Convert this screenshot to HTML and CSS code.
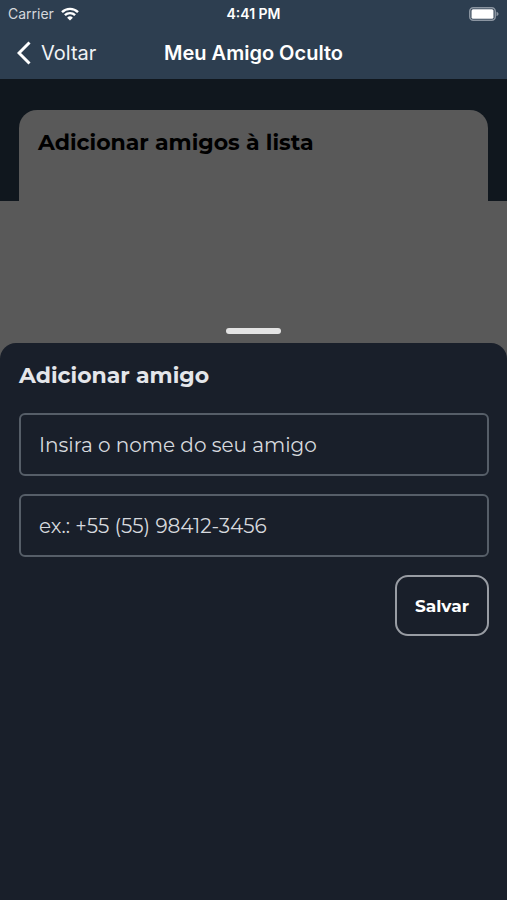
FILE: index.html
```html
<!DOCTYPE html>
<html lang="pt-BR">
<head>
  <meta charset="utf-8">
  <meta name="viewport" content="width=device-width, initial-scale=1">
  <title>Meu Amigo Oculto</title>
  <link rel="stylesheet" href="styles.css">
</head>
<body>
  <header class="top">
    <div class="status">
      <span class="carrier">Carrier
        <svg class="wifi" viewBox="0 0 18 14" aria-hidden="true">
          <path d="M1 5.2a11.4 11.4 0 0 1 16 0" />
          <path d="M3.9 8.2a7.2 7.2 0 0 1 10.2 0" />
          <path class="wifi-dot" d="M9 13.6 6.1 10.7a4.1 4.1 0 0 1 5.8 0z" />
        </svg>
      </span>
      <span class="time">4:41 PM</span>
      <svg class="battery" viewBox="0 0 30 14" aria-hidden="true">
        <rect class="battery-case" x="0.75" y="0.75" width="25.5" height="12.5" rx="3.5" />
        <rect class="battery-level" x="2.500" y="2.200" width="22" height="9.600" rx="1.500" />
        <path class="battery-tip" d="M27.5 4.8c1.2.4 2 1.200 2 2.200s-.8 1.800-2 2.200z" />
      </svg>
    </div>
    <nav class="nav">
      <a class="back" href="#voltar">
        <svg class="chevron" viewBox="0 0 14 24" aria-hidden="true"><path d="M12.500 1.500 2 12l10.500 10.500" /></svg>
        Voltar
      </a>
      <h1 class="title">Meu Amigo Oculto</h1>
    </nav>
  </header>
  <main class="screen">
    <section class="band">
      <div class="card"><h2 class="card-title">Adicionar amigos à lista</h2></div>
    </section>
    <div class="grab"><span class="handle"></span></div>
    <form class="sheet">
      <h2 class="sheet-title">Adicionar amigo</h2>
      <input class="field" type="text" aria-label="Nome do amigo" placeholder="Insira o nome do seu amigo">
      <input class="field" type="tel" aria-label="Telefone do amigo" placeholder="ex.: +55 (55) 98412-3456">
      <button class="save" type="button">Salvar</button>
    </form>
  </main>
</body>
</html>
```

FILE: styles.css
```css
* {
  box-sizing: border-box;
}

body {
  margin: 0;
  min-height: 100vh;
  display: flex;
  flex-direction: column;
  background: #191f2a;
  color: #fff;
  font-family: Montserrat, Inter, sans-serif;
}

h1,
h2 {
  margin: 0;
}

.top {
  background: #2d3e50;
  font-family: Inter, sans-serif;
}

.status,
.nav {
  display: grid;
  grid-template-columns: 1fr auto 1fr;
  align-items: center;
}

.status {
  height: 27px;
  padding: 0 8px;
  font-size: 14px;
}

.carrier {
  display: flex;
  align-items: center;
  gap: 7px;
  color: #d5d8dc;
}

.time {
  font-weight: 600;
}

.wifi {
  width: 18px;
  height: 14px;
  fill: none;
  stroke: #fff;
  stroke-width: 2.4;
}

.wifi-dot {
  fill: #fff;
  stroke: none;
}

.battery {
  width: 30px;
  height: 14px;
  justify-self: end;
}

.battery-case {
  fill: none;
  stroke: #8b95a1;
  stroke-width: 1.5;
}

.battery-level {
  fill: #fff;
}

.battery-tip {
  fill: #8b95a1;
}

.nav {
  height: 52px;
  padding: 0 17px;
}

.back {
  display: flex;
  align-items: center;
  gap: 10px;
  color: #f0f2f5;
  font-size: 20px;
  text-decoration: none;
}

.chevron {
  width: 14px;
  height: 24px;
  fill: none;
  stroke: #fff;
  stroke-width: 3;
}

.title {
  font-size: 20px;
  font-weight: 600;
}

.screen {
  flex: 1;
  display: flex;
  flex-direction: column;
  background: #595959;
}

.band {
  padding: 31px 19px 0;
  background: #10171e;
}

.card {
  min-height: 91px;
  padding: 19px;
  border-radius: 18px 18px 0 0;
  background: #595959;
}

.card-title {
  color: #000;
  font-size: 22px;
  font-weight: 700;
  line-height: 28px;
}

.grab {
  display: flex;
  justify-content: center;
  padding: 127px 0 9px;
}

.handle {
  width: 55px;
  height: 6px;
  border-radius: 3px;
  background: #e3e3e3;
}

.sheet {
  flex: 1;
  display: flex;
  flex-direction: column;
  gap: 18px;
  padding: 19px 18px 18px 19px;
  border-radius: 16px 16px 0 0;
  background: #191f2a;
}

.sheet-title {
  padding-bottom: 5px;
  color: #e4e6ea;
  font-size: 22px;
  font-weight: 700;
  line-height: 28px;
}

.field {
  width: 100%;
  height: 63px;
  padding: 0 18px;
  border: 2px solid #565e68;
  border-radius: 6px;
  background: transparent;
  color: #d6d9de;
  font: inherit;
  font-size: 20px;
}

.field::placeholder {
  color: #d6d9de;
  opacity: 1;
}

.save {
  align-self: flex-end;
  height: 61px;
  padding: 0 18px;
  border: 2px solid #989ca3;
  border-radius: 13px;
  background: transparent;
  color: #fff;
  font: inherit;
  font-size: 17px;
  font-weight: 700;
}
```
